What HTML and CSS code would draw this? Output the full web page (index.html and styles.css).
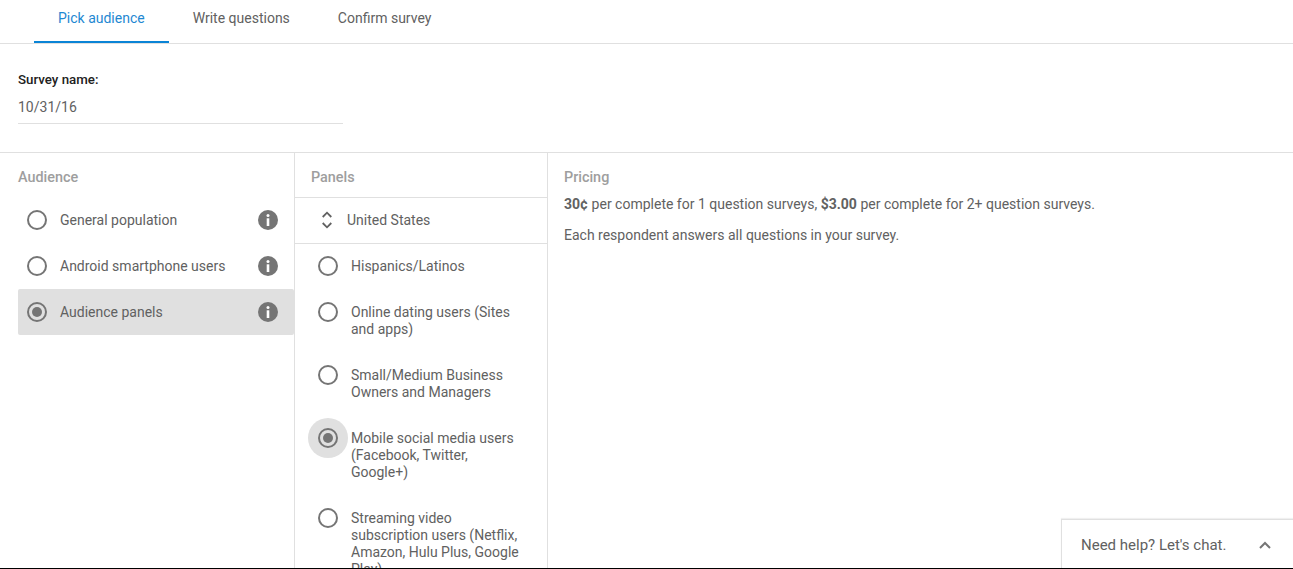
FILE: index.html
```html
<!DOCTYPE html>
<html lang="en">
<head>
<meta charset="utf-8">
<title>Survey</title>
<link rel="stylesheet" href="styles.css">
</head>
<body>
<div class="page">
  <nav class="tabs">
    <a class="tab active">Pick audience</a>
    <a class="tab">Write questions</a>
    <a class="tab">Confirm survey</a>
  </nav>
  <section class="name">
    <div class="name-label">Survey name:</div>
    <div class="name-value">10/31/16</div>
  </section>
  <main class="cols">
    <div class="col col-audience">
      <h2 class="heading heading-audience">Audience</h2>
      <div class="aud-row">
        <span class="radio"></span><span class="aud-label">General population</span>
        <svg class="info" viewBox="0 0 20 20"><circle cx="10" cy="10" r="10" fill="#757575"/><circle cx="10" cy="5.6" r="1.5" fill="#fff"/><rect x="8.7" y="8.3" width="2.6" height="7.7" fill="#fff"/></svg>
      </div>
      <div class="aud-row">
        <span class="radio"></span><span class="aud-label">Android smartphone users</span>
        <svg class="info" viewBox="0 0 20 20"><circle cx="10" cy="10" r="10" fill="#757575"/><circle cx="10" cy="5.6" r="1.5" fill="#fff"/><rect x="8.7" y="8.3" width="2.6" height="7.7" fill="#fff"/></svg>
      </div>
      <div class="aud-row selected">
        <span class="radio checked"></span><span class="aud-label">Audience panels</span>
        <svg class="info" viewBox="0 0 20 20"><circle cx="10" cy="10" r="10" fill="#757575"/><circle cx="10" cy="5.6" r="1.5" fill="#fff"/><rect x="8.7" y="8.3" width="2.6" height="7.7" fill="#fff"/></svg>
      </div>
    </div>
    <div class="col col-panels">
      <h2 class="heading heading-panels">Panels</h2>
      <div class="country">
        <svg class="updown" viewBox="0 0 10 18"><path d="M.7 6l4.3-4.3L9.3 6M.7 12l4.3 4.3L9.3 12" fill="none" stroke="#616161" stroke-width="1.8"/></svg>
        <span>United States</span>
      </div>
      <div class="panel-list">
        <div class="panel-row"><span class="radio-wrap"><span class="radio"></span></span><span class="panel-label">Hispanics/Latinos</span></div>
        <div class="panel-row"><span class="radio-wrap"><span class="radio"></span></span><span class="panel-label">Online dating users (Sites and apps)</span></div>
        <div class="panel-row"><span class="radio-wrap"><span class="radio"></span></span><span class="panel-label">Small/Medium Business Owners and Managers</span></div>
        <div class="panel-row"><span class="radio-wrap focus"><span class="radio checked"></span></span><span class="panel-label">Mobile social media users (Facebook, Twitter, Google+)</span></div>
        <div class="panel-row"><span class="radio-wrap"><span class="radio"></span></span><span class="panel-label">Streaming video subscription users (Netflix, Amazon, Hulu Plus, Google Play)</span></div>
      </div>
    </div>
    <div class="col col-pricing">
      <h2 class="heading heading-pricing">Pricing</h2>
      <p class="price"><b>30¢</b> per complete for 1 question surveys, <b>$3.00</b> per complete for 2+ question surveys.</p>
      <p class="price">Each respondent answers all questions in your survey.</p>
    </div>
  </main>
</div>
<aside class="chat">
  <span>Need help? Let's chat.</span>
  <svg class="chev" viewBox="0 0 12 8"><path d="M1 7l5-5 5 5" fill="none" stroke="#757575" stroke-width="2"/></svg>
</aside>
</body>
</html>
```
FILE: styles.css
```css
* { box-sizing: border-box; }
html, body { margin: 0; height: 569px; overflow: hidden; background: #fff; }
body {
  font-family: Roboto, "Liberation Sans", sans-serif;
  font-size: 14px;
  color: #616161;
  border-bottom: 1px solid #000;
  position: relative;
}
.page { height: 568px; display: flex; flex-direction: column; overflow: hidden; }
.tabs { display: flex; height: 44px; flex: none; padding-left: 34px; border-bottom: 1px solid #e0e0e0; }
.tab { display: block; height: 43px; padding: 0 24px; line-height: 37px; font-size: 14px; }
.tab.active { color: #1e88d2; border-bottom: 2px solid #0a84d6; }
.name { flex: none; height: 109px; padding: 27px 18px 0; border-bottom: 1px solid #e0e0e0; }
.name-label { font-size: 13.3px; font-weight: 500; color: #212121; line-height: 17px; }
.name-value { width: 325px; height: 36px; padding-top: 9px; line-height: 20px; font-size: 14px; border-bottom: 1px solid #e0e0e0; }
.cols { flex: 1; display: flex; min-height: 0; }
.col { flex: none; overflow: hidden; }
.col-audience { width: 295px; padding-left: 18px; border-right: 1px solid #e0e0e0; }
.col-panels { width: 253px; border-right: 1px solid #e0e0e0; }
.col-pricing { flex: 1; padding-left: 16px; }
.heading { margin: 0; height: 45px; line-height: 49px; font-size: 14.4px; font-weight: 500; color: #9e9e9e; }
.heading-audience { height: 44px; }
.heading-panels { padding-left: 16px; border-bottom: 1px solid #e0e0e0; }
.heading-pricing { height: 43px; }
.aud-row { display: flex; align-items: center; height: 46px; padding-left: 9px; border-radius: 2px; }
.aud-row.selected { background: #e0e0e0; }
.aud-label { flex: 1; margin-left: 13px; }
.info { width: 20px; height: 20px; margin-right: 16px; }
.radio { display: block; flex: none; width: 20px; height: 20px; border: 2px solid #757575; border-radius: 50%; position: relative; }
.radio.checked::after { content: ""; position: absolute; left: 3px; top: 3px; width: 10px; height: 10px; border-radius: 50%; background: #757575; }
.country { display: flex; align-items: center; height: 46px; padding: 0 0 1px 27px; border-bottom: 1px solid #e0e0e0; }
.updown { width: 10px; height: 18px; margin-right: 15px; }
.panel-row { display: flex; align-items: flex-start; padding: 14px 24px 15px 13px; }
.radio-wrap { flex: none; width: 40px; height: 40px; margin: -12px 3px -24px 0; display: flex; align-items: center; justify-content: center; border-radius: 50%; }
.radio-wrap.focus { background: #e0e0e0; }
.panel-label { line-height: 17px; flex: 1; }
.price { margin: 0 0 14px; line-height: 17px; font-size: 14px; }
.price b { font-weight: 700; }
.chat {
  position: absolute; right: 0; bottom: 0; width: 232px; height: 49px;
  display: flex; align-items: center; justify-content: space-between;
  padding: 2px 22px 0 19px; background: #fff;
  border: 1px solid #e0e0e0; border-width: 1px 0 0 1px; font-size: 15px;
  box-shadow: 0 -1px 1px rgba(0, 0, 0, .06);
}
.chev { width: 12px; height: 8px; }
```
